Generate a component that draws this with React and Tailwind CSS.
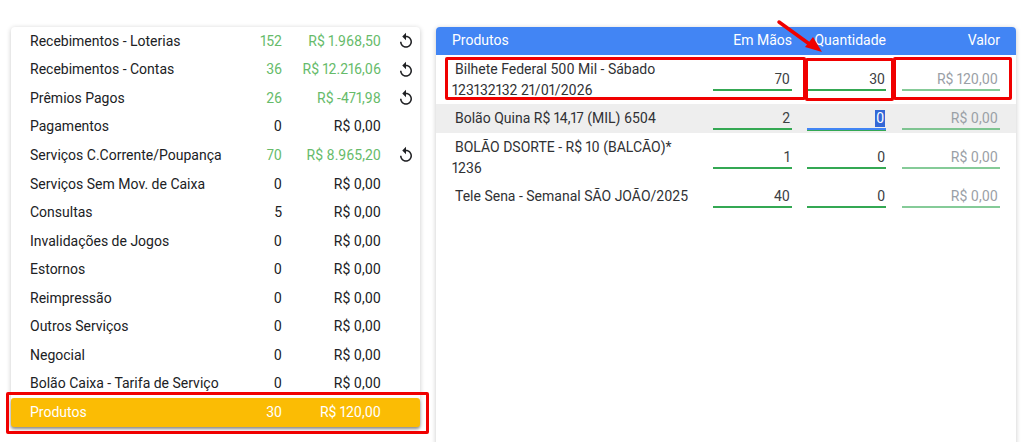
import React from 'react'
import { MdReplay } from 'react-icons/md'

const resumo = [
  { nome: 'Recebimentos - Loterias', qtd: '152', valor: 'R$ 1.968,50', ativo: true },
  { nome: 'Recebimentos - Contas', qtd: '36', valor: 'R$ 12.216,06', ativo: true },
  { nome: 'Prêmios Pagos', qtd: '26', valor: 'R$ -471,98', ativo: true },
  { nome: 'Pagamentos', qtd: '0', valor: 'R$ 0,00' },
  { nome: 'Serviços C.Corrente/Poupança', qtd: '70', valor: 'R$ 8.965,20', ativo: true },
  { nome: 'Serviços Sem Mov. de Caixa', qtd: '0', valor: 'R$ 0,00' },
  { nome: 'Consultas', qtd: '5', valor: 'R$ 0,00' },
  { nome: 'Invalidações de Jogos', qtd: '0', valor: 'R$ 0,00' },
  { nome: 'Estornos', qtd: '0', valor: 'R$ 0,00' },
  { nome: 'Reimpressão', qtd: '0', valor: 'R$ 0,00' },
  { nome: 'Outros Serviços', qtd: '0', valor: 'R$ 0,00' },
  { nome: 'Negocial', qtd: '0', valor: 'R$ 0,00' },
  { nome: 'Bolão Caixa - Tarifa de Serviço', qtd: '0', valor: 'R$ 0,00' },
]

const produtos = [
  { nome: 'Bilhete Federal 500 Mil - Sábado 123132132 21/01/2026', mao: '70', qtd: '30', valor: 'R$ 120,00' },
  { nome: 'Bolão Quina R$ 14,17 (MIL) 6504', mao: '2', qtd: '0', valor: 'R$ 0,00', foco: true },
  { nome: 'BOLÃO DSORTE - R$ 10 (BALCÃO)* 1236', mao: '1', qtd: '0', valor: 'R$ 0,00' },
  { nome: 'Tele Sena - Semanal SÃO JOÃO/2025', mao: '40', qtd: '0', valor: 'R$ 0,00' },
]

const ResumoRow = ({ item }) => (
  <div className="flex h-[28.55px] items-center pl-[19px]">
    <span className="flex-1 text-[#202124]">{item.nome}</span>
    <span className={`w-[40px] text-right proportional-nums ${item.ativo ? 'text-[#66bb6a]' : 'text-[#202124]'}`}>{item.qtd}</span>
    <span className={`w-[99px] text-right proportional-nums ${item.ativo ? 'text-[#66bb6a]' : 'text-[#202124]'}`}>{item.valor}</span>
    <span className="flex w-[39px] justify-end pr-[5px]">
      {item.ativo && <MdReplay className="h-[18px] w-[18px] text-[#202124]" />}
    </span>
  </div>
)

const ProdutoRow = ({ item }) => (
  <div className={`flex items-center py-[3.5px] pl-4 pr-4 ${item.foco ? 'bg-[#eeeeee]' : ''}`}>
    <div className="w-[261px] pr-[12px] indent-[3px] leading-[21px] text-[#303134] proportional-nums">{item.nome}</div>
    <div className="w-[79px] border-b-2 border-[#34a853] pr-[2px] text-right leading-[20px] text-[#3c4043] proportional-nums">{item.mao}</div>
    <div className={`ml-[15px] w-[79px] border-b-2 pr-[1px] text-right leading-[20px] text-[#3c4043] ${item.foco ? 'border-[#4285f4] shadow-[0_1px_0_#34a853]' : 'border-[#34a853]'}`}>
      {item.foco ? <span className="inline-block bg-[#3367d6] px-[1px] leading-[17px] text-white">{item.qtd}</span> : item.qtd}
    </div>
    <div className="ml-[16px] w-[98px] border-b-2 border-[#34a853]/60 pr-[2px] text-right leading-[20px] text-[#9aa0a6] proportional-nums">{item.valor}</div>
  </div>
)

export default function App() {
  return (
    <div className="relative flex h-[442px] items-start gap-4 overflow-hidden bg-white pl-[11px] pt-[27px] text-[14px]" style={{ fontFamily: 'Roboto, "Noto Sans", sans-serif' }}>
      {/* Resumo */}
      <div className="w-[409px] rounded-[4px] shadow-[0_1px_5px_rgba(0,0,0,0.22)]">
        {resumo.map((item) => (
          <ResumoRow key={item.nome} item={item} />
        ))}
        <div className="flex h-[28.55px] items-center rounded-[3px] bg-[#fbbc04] pl-[19px] text-white shadow-[0_2px_3px_rgba(0,0,0,0.35)]">
          <span className="flex-1">Produtos</span>
          <span className="w-[40px] text-right">30</span>
          <span className="w-[99px] text-right proportional-nums">R$ 120,00</span>
          <span className="w-[39px]" />
        </div>
      </div>

      {/* Produtos */}
      <div className="h-[440px] w-[580px] rounded-t-[4px] shadow-[0_1px_5px_rgba(0,0,0,0.22)]">
        <div className="flex h-[28px] items-center rounded-t-[4px] bg-[#4285f4] pb-[1px] pl-4 pr-4 text-white">
          <span className="w-[261px]">Produtos</span>
          <span className="w-[79px] text-right">Em Mãos</span>
          <span className="ml-[15px] w-[79px] text-right">Quantidade</span>
          <span className="ml-[16px] w-[98px] text-right">Valor</span>
        </div>
        {produtos.map((item) => (
          <ProdutoRow key={item.nome} item={item} />
        ))}
      </div>

      {/* Marcações em vermelho */}
      <div className="absolute left-[6px] top-[392px] h-[42px] w-[423px] rounded-[2px] border-[3px] border-[#f00000]" />
      <div className="absolute left-[445px] top-[57px] h-[43px] w-[361px] rounded-[2px] border-[3px] border-[#f00000]" />
      <div className="absolute left-[805px] top-[58px] h-[43px] w-[89px] rounded-[2px] border-[3px] border-[#f00000]" />
      <div className="absolute left-[893px] top-[57px] h-[43px] w-[119px] rounded-[2px] border-[3px] border-[#f00000]" />
      <svg className="absolute left-[775px] top-[18px]" width="50" height="36" viewBox="0 0 50 36">
        <path d="M4 4 L33 25" stroke="#f00000" strokeWidth="3.5" strokeLinecap="round" />
        <path d="M30 29 L38 19 L47 34 Z" fill="#f00000" />
      </svg>
    </div>
  )
}
